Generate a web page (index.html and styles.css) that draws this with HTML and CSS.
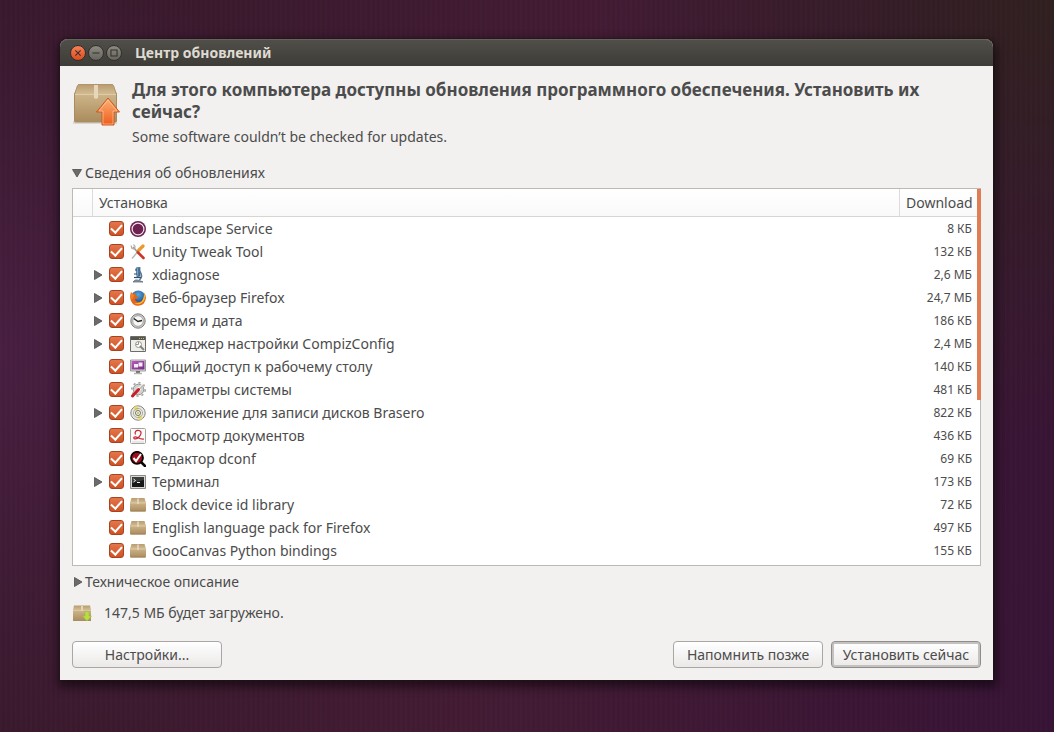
FILE: index.html
```html
<!DOCTYPE html>
<html lang="ru">
<head>
<meta charset="utf-8">
<meta name="viewport" content="width=device-width, initial-scale=1">
<title>Центр обновлений</title>
<link rel="stylesheet" href="styles.css">
</head>
<body>
<svg class="defs" aria-hidden="true">
  <defs>
    <linearGradient id="box" x1="0" y1="0" x2="0" y2="1"><stop offset="0" stop-color="#cfb68b"/><stop offset="1" stop-color="#a98c5d"/></linearGradient>
    <linearGradient id="lid" x1="0" y1="0" x2="0" y2="1"><stop offset="0" stop-color="#b99c70"/><stop offset="1" stop-color="#d3bc94"/></linearGradient>
    <linearGradient id="up" x1="0" y1="0" x2="0" y2="1"><stop offset="0" stop-color="#fbb276"/><stop offset="1" stop-color="#ee5c1c"/></linearGradient>
    <linearGradient id="purple" x1="0" y1="0" x2="1" y2="1"><stop offset="0" stop-color="#c05ac4"/><stop offset="1" stop-color="#6f2c7e"/></linearGradient>
    <radialGradient id="globe" cx=".5" cy=".3" r=".7"><stop offset="0" stop-color="#58a9e0"/><stop offset="1" stop-color="#143a7c"/></radialGradient>
    <symbol id="package" viewBox="0 0 16 16">
      <path d="M0 5h16v8.500q0 1-1 1H1q-1 0-1-1z" fill="url(#box)"/><path d="M1.500 1h13L16 6H0z" fill="url(#lid)"/>
      <path d="M0 6h16" stroke="#e2cfab" stroke-width=".8"/><path d="M.5 14h15" stroke="#9c8257" stroke-width=".8"/><path d="M7.300 1.500h1.400V7H7.300z" fill="#eadec6"/>
    </symbol>
  </defs>
</svg>
<main class="window">
  <header class="titlebar">
    <button class="dot dot-close" type="button" aria-label="Закрыть"><svg viewBox="0 0 16 16"><path d="M5 5l6 6M11 5l-6 6"/></svg></button>
    <button class="dot" type="button" aria-label="Свернуть"><svg viewBox="0 0 16 16"><path d="M4 8h8"/></svg></button>
    <button class="dot" type="button" aria-label="Развернуть"><svg viewBox="0 0 16 16"><path d="M4.500 4.500h7v7h-7z"/></svg></button>
    <span class="title">Центр обновлений</span>
  </header>
  <div class="content">
    <section class="intro">
      <svg class="intro-icon" viewBox="0 0 48 48" aria-hidden="true">
        <path d="M1 40h44v3H1z" fill="#000" opacity=".1"/>
        <path d="M2.500 12h42v28q0 1-1 1h-40q-1 0-1-1z" fill="url(#box)" stroke="#a88c5f"/>
        <path d="M7 3.500h33q1 0 1.500 1l3 9h-42l3-9q.5-1 1.500-1z" fill="url(#lid)" stroke="#b0946a"/>
        <path d="M3 13.500h41" stroke="#dfcba5"/><path d="M22 4h4v13q-2 1.500-4 0z" fill="#e6d7bb"/>
        <path d="M36 17L47.500 31H42v13H30V31h-5.500z" fill="url(#up)" stroke="#cf5421"/>
        <path d="M36 19l9 11h-4v13H31V30h-4z" fill="none" stroke="#ffd3a6" stroke-opacity=".6"/>
      </svg>
      <div>
        <h1>Для этого компьютера доступны обновления программного обеспечения. Установить их сейчас?</h1>
        <p>Some software couldn’t be checked for updates.</p>
      </div>
    </section>
    <button class="disclosure" type="button" aria-expanded="true"><svg class="arrow arrow-down" viewBox="0 0 10 10"><path d="M.5 1.500h9L5 9z"/></svg>Сведения об обновлениях</button>
    <div class="list">
      <table>
        <thead><tr><th class="gutter"></th><th class="name">Установка</th><th class="size">Download</th></tr></thead>
        <tbody>
          <tr><td></td><td><div class="item"><span class="expand"></span><input type="checkbox" id="u1" checked><label for="u1"><svg viewBox="0 0 16 16"><circle cx="8" cy="8" r="8" fill="#6d2250"/><circle cx="8" cy="8" r="5.900" fill="none" stroke="#f3e6ee" stroke-width="1.200"/></svg>Landscape Service</label></div></td><td class="size">8 КБ</td></tr>
          <tr><td></td><td><div class="item"><span class="expand"></span><input type="checkbox" id="u2" checked><label for="u2"><svg viewBox="0 0 16 16"><path d="M13 2L7.500 7.500" stroke="#eb9a2e" stroke-width="3.200" stroke-linecap="round"/><path d="M8 7.500L2 14.500" stroke="#b8b7af" stroke-width="1.400"/><path d="M3 3l5 5.500" stroke="#9a9a94" stroke-width="1.600"/><path d="M1 1.500l1 3L4.500 5 5 2.500 3.500.5" fill="none" stroke="#aaa9a2" stroke-width="1.200"/><path d="M8 8.500l5.500 5.500" stroke="#cb3427" stroke-width="2.600" stroke-linecap="round"/></svg>Unity Tweak Tool</label></div></td><td class="size">132 КБ</td></tr>
          <tr><td></td><td><div class="item"><button class="expand" type="button" aria-label="Показать"><svg class="arrow" viewBox="0 0 10 10"><path d="M1.500.5L9 5 1.500 9.500z"/></svg></button><input type="checkbox" id="u3" checked><label for="u3"><svg viewBox="0 0 16 16"><path d="M6 1l4-1v9l-3 1z" fill="#79a6cc" stroke="#385f83" stroke-width=".7"/><path d="M9 1v8M5 3h2M4 7h3" stroke="#264662"/><path d="M9.500 4q4 5 0 9" fill="none" stroke="#547795" stroke-width="1.600"/><path d="M4 10.500h7" stroke="#334f68" stroke-width="1.200"/><path d="M3 15q2-3 5-2l5 2z" fill="#8c9ba8" stroke="#53616e" stroke-width=".7"/></svg>xdiagnose</label></div></td><td class="size">2,6 МБ</td></tr>
          <tr><td></td><td><div class="item"><button class="expand" type="button" aria-label="Показать"><svg class="arrow" viewBox="0 0 10 10"><path d="M1.500.5L9 5 1.500 9.500z"/></svg></button><input type="checkbox" id="u4" checked><label for="u4"><svg viewBox="0 0 16 16"><circle cx="8.200" cy="7.500" r="7" fill="url(#globe)"/><path d="M1 2Q-.5 7 .8 10.500 3 16 8.500 15.700 15 15 15.800 8.500 16 5 14 2.500q.5 4-.5 6Q12 12 8.500 12 5 11.500 5 9l3-.7q1-1.500-1-1.800L5.500 5.800 6 3.500Q4 3 3 4z" fill="#e4661a"/><path d="M14 3q2.500 5-1 9-4 4-9 1 5 1 7.500-1.500Q14 9 14 3z" fill="#fbc02d"/><path d="M1 3q-1 4 .7 7L3.500 7l.7-2z" fill="#f58220"/></svg>Веб-браузер Firefox</label></div></td><td class="size">24,7 МБ</td></tr>
          <tr><td></td><td><div class="item"><button class="expand" type="button" aria-label="Показать"><svg class="arrow" viewBox="0 0 10 10"><path d="M1.500.5L9 5 1.500 9.500z"/></svg></button><input type="checkbox" id="u5" checked><label for="u5"><svg viewBox="0 0 16 16"><circle cx="8" cy="8" r="7.200" fill="#c9c9c7" stroke="#80807d"/><circle cx="8" cy="8" r="5.300" fill="#f7f7f6" stroke="#999" stroke-width=".8"/><path d="M3.800 5.500L8 8.500l4-1" fill="none" stroke="#222" stroke-width="1.500"/></svg>Время и дата</label></div></td><td class="size">186 КБ</td></tr>
          <tr><td></td><td><div class="item"><button class="expand" type="button" aria-label="Показать"><svg class="arrow" viewBox="0 0 10 10"><path d="M1.500.5L9 5 1.500 9.500z"/></svg></button><input type="checkbox" id="u6" checked><label for="u6"><svg viewBox="0 0 16 16"><path d="M.5.5h15v15H.5z" fill="#eeeeeb" stroke="#6e6e69"/><path d="M1 1h14v3H1z" fill="#565650"/><path d="M9 2.500h1M11 2.500h1M13 2.500h1" stroke="#e7ad4d"/><circle cx="8.500" cy="8.500" r="3" fill="#fff" stroke="#96968f"/><path d="M8.500 6v2.500H6" fill="none" stroke="#96968f"/><path d="M10 10l4 4" stroke="#85857f" stroke-width="2"/></svg>Менеджер настройки CompizConfig</label></div></td><td class="size">2,4 МБ</td></tr>
          <tr><td></td><td><div class="item"><span class="expand"></span><input type="checkbox" id="u7" checked><label for="u7"><svg viewBox="0 0 16 16"><path d="M.5 1h15v11H.5z" fill="#ddd" stroke="#858580" stroke-width=".8"/><path d="M1.500 2h13v8.500h-13z" fill="url(#purple)"/><path d="M4 5h4v3.500H4zM8.500 3.500h4v4h-4z" fill="#f8ebfa"/><path d="M6 12h4v2H6z" fill="#73736e"/><path d="M4 14.500h8" stroke="#b4b4af" stroke-width="1.500"/></svg>Общий доступ к рабочему столу</label></div></td><td class="size">140 КБ</td></tr>
          <tr><td></td><td><div class="item"><span class="expand"></span><input type="checkbox" id="u8" checked><label for="u8"><svg viewBox="0 0 16 16"><circle cx="8.500" cy="7.500" r="5.300" fill="#d2d2cf" stroke="#91918c"/><circle cx="8.500" cy="7.500" r="6.700" fill="none" stroke="#a1a19c" stroke-width="1.600" stroke-dasharray="2.200 3"/><circle cx="9" cy="7" r="2" fill="#f8f8f8"/><path d="M13.500 2L7 9" stroke="#eee" stroke-width="2.400"/><path d="M14 2.500L8 8.500" stroke="#8c8c89"/><path d="M8.500 7.500L2.500 14" stroke="#c91d2a" stroke-width="3" stroke-linecap="round"/></svg>Параметры системы</label></div></td><td class="size">481 КБ</td></tr>
          <tr><td></td><td><div class="item"><button class="expand" type="button" aria-label="Показать"><svg class="arrow" viewBox="0 0 10 10"><path d="M1.500.5L9 5 1.500 9.500z"/></svg></button><input type="checkbox" id="u9" checked><label for="u9"><svg viewBox="0 0 16 16"><circle cx="8" cy="8" r="7.200" fill="#e9e9e4" stroke="#84847f"/><path d="M8 8L3 3q2-2 5-2zM8 8l5 5q-2 2-5 2z" fill="#e9dd6f"/><circle cx="8" cy="8" r="4.600" fill="none" stroke="#a2a28f" stroke-width=".8"/><circle cx="8" cy="8" r="2.500" fill="#f8f8f2" stroke="#75756b"/><circle cx="8" cy="8" r="1" fill="#c0b846"/></svg>Приложение для записи дисков Brasero</label></div></td><td class="size">822 КБ</td></tr>
          <tr><td></td><td><div class="item"><span class="expand"></span><input type="checkbox" id="u10" checked><label for="u10"><svg viewBox="0 0 16 16"><rect x=".5" y=".5" width="15" height="15" rx="1" fill="#fafafa" stroke="#a2a29e"/><path d="M5.500 6.500C4 3.500 6.500 2 9 2.500c3 .7 2.500 4 0 6.500-1.500 1.500-3.500 2.500-5 1.500-1-1.500 1.500-2 3.500-1s4 2 6.500 1.500" fill="none" stroke="#cc2330" stroke-width="1.200"/><path d="M2 14h12" stroke="#d5d5d2"/></svg>Просмотр документов</label></div></td><td class="size">436 КБ</td></tr>
          <tr><td></td><td><div class="item"><span class="expand"></span><input type="checkbox" id="u11" checked><label for="u11"><svg viewBox="0 0 16 16"><path d="M11 11l4 4" stroke="#080808" stroke-width="2.500" stroke-linecap="round"/><circle cx="7" cy="6.800" r="6" fill="#9e1019" stroke="#0b0505" stroke-width="1.800"/><path d="M3.500 7L6 10 11 3" fill="none" stroke="#fff" stroke-width="2"/></svg>Редактор dconf</label></div></td><td class="size">69 КБ</td></tr>
          <tr><td></td><td><div class="item"><button class="expand" type="button" aria-label="Показать"><svg class="arrow" viewBox="0 0 10 10"><path d="M1.500.5L9 5 1.500 9.500z"/></svg></button><input type="checkbox" id="u12" checked><label for="u12"><svg viewBox="0 0 16 16"><path d="M.5 1.500h15v13H.5z" fill="#d8d8d5" stroke="#8a8a86"/><path d="M2 3h12v10H2z" fill="#171918"/><path d="M2 3h12v3L2 9z" fill="#fff" opacity=".16"/><path d="M3.500 5l2 1.500-2 1.500M7 8.500h3" fill="none" stroke="#eee"/></svg>Терминал</label></div></td><td class="size">173 КБ</td></tr>
          <tr><td></td><td><div class="item"><span class="expand"></span><input type="checkbox" id="u13" checked><label for="u13"><svg><use href="#package"/></svg>Block device id library</label></div></td><td class="size">72 КБ</td></tr>
          <tr><td></td><td><div class="item"><span class="expand"></span><input type="checkbox" id="u14" checked><label for="u14"><svg><use href="#package"/></svg>English language pack for Firefox</label></div></td><td class="size">497 КБ</td></tr>
          <tr><td></td><td><div class="item"><span class="expand"></span><input type="checkbox" id="u15" checked><label for="u15"><svg><use href="#package"/></svg>GooCanvas Python bindings</label></div></td><td class="size">155 КБ</td></tr>
        </tbody>
      </table>
      <div class="scroll-thumb"></div>
    </div>
    <button class="disclosure" type="button" aria-expanded="false"><svg class="arrow" viewBox="0 0 10 10"><path d="M2.500.5L10 5 2.500 9.500z"/></svg>Техническое описание</button>
    <div class="status">
      <svg viewBox="0 0 20 20" aria-hidden="true"><path d="M1 7h18v11H1z" fill="url(#box)"/><path d="M2 2.500h16l1 4.500H1z" fill="url(#lid)"/><path d="M1 7.500h18" stroke="#dcc9a4" stroke-width=".8"/><path d="M9 3h2v5H9z" fill="#e4d4b5"/><path d="M13 8.500h4V13h2.500L15 18l-4.500-5H13z" fill="#b9df3c" stroke="#9aba4a" stroke-width=".6"/></svg>
      <span>147,5 МБ будет загружено.</span>
    </div>
    <footer class="actions">
      <button class="btn" type="button">Настройки...</button>
      <span class="spacer"></span>
      <button class="btn" type="button">Напомнить позже</button>
      <button class="btn btn-default" type="button">Установить сейчас</button>
    </footer>
  </div>
</main>
</body>
</html>
```

FILE: styles.css
```css
* { box-sizing: border-box; }
body {
  margin: 0;
  min-height: 100vh;
  padding: 39px 61px 51px 60px;
  font: 14px/22px "Noto Sans", "Open Sans", sans-serif;
  color: #4c4c4c;
  background:
    repeating-linear-gradient(90deg, rgba(255, 255, 255, .01) 0 2px, transparent 2px 5px),
    radial-gradient(circle at 100% 0, #30201f 0, rgba(48, 32, 31, 0) 35%),
    radial-gradient(circle at 0 48%, #471e40 0, rgba(71, 30, 64, 0) 35%),
    linear-gradient(100deg, #36182a, #421b33 50%, #371335);
}
button { font: inherit; color: inherit; }
.defs { position: absolute; width: 0; height: 0; }
.window {
  border-radius: 8px 8px 0 0;
  background: #f2f1f0;
  box-shadow: 0 0 0 1px rgba(30, 20, 25, .4), 1px 4px 10px 3px rgba(0, 0, 0, .5);
}
.titlebar {
  display: flex;
  align-items: center;
  gap: 2px;
  height: 27px;
  padding: 0 10px;
  border-radius: 8px 8px 0 0;
  background: linear-gradient(#504f49, #3d3c37);
  box-shadow: inset 0 1px #656459;
}
.title { padding-left: 11px; font-size: 14px; font-weight: 700; color: #dfdbd2; }
.dot {
  width: 16px;
  height: 16px;
  padding: 0;
  border: 1px solid #32312d;
  border-radius: 50%;
  background: linear-gradient(#8b8980, #66645d);
}
.dot-close { background: linear-gradient(#f58057, #df4a1c); }
.dot svg { display: block; width: 14px; height: 14px; fill: none; stroke: #32312d; stroke-width: 1.2; }
.content { display: flex; flex-direction: column; padding: 13px 12px 12px; }
.intro { display: flex; gap: 12px; }
.intro-icon { flex: none; width: 48px; height: 48px; margin-top: 2px; }
h1 { margin: 0; font-size: 17px; line-height: 22px; font-weight: 700; }
p { margin: 3px 0 0; }
.disclosure {
  display: flex;
  align-items: center;
  gap: 3px;
  align-self: flex-start;
  padding: 0;
  border: 0;
  background: none;
}
.intro + .disclosure { margin: 14px 0 4px; }
.arrow { display: block; width: 10px; height: 10px; fill: #6b6b6b; stroke: #4c4c4c; stroke-width: .8; }
.list { position: relative; padding-bottom: 3px; border: 1px solid #bdb9b5; background: #fff; }
table { width: 100%; border-collapse: separate; border-spacing: 0; table-layout: fixed; }
th {
  height: 28px;
  padding: 0 6px;
  border-bottom: 1px solid #d7d5d3;
  border-right: 1px solid #dedcda;
  background: linear-gradient(#fff, #f9f9f9);
  font-weight: 400;
  text-align: left;
}
th:last-child { border-right: 0; }
td { height: 23px; padding: 0; }
.gutter { width: 20px; }
th.size { width: 80px; }
td.size { padding-right: 8px; font-size: 12px; text-align: right; }
.item { display: flex; align-items: center; gap: 6px; height: 23px; }
.expand { flex: none; width: 10px; padding: 0; border: 0; background: none; }
input {
  appearance: none;
  flex: none;
  width: 15px;
  height: 15px;
  margin: 0;
  border: 1px solid #a9431f;
  border-radius: 3px;
  background: linear-gradient(#e4764c, #cf5223);
}
input:checked::before {
  content: "";
  display: block;
  width: 5px;
  height: 9px;
  margin: 0 auto;
  border: solid #fff;
  border-width: 0 2px 2px 0;
  transform: rotate(42deg);
}
label { display: flex; align-items: center; gap: 6px; white-space: nowrap; }
label svg { flex: none; width: 16px; height: 16px; }
.scroll-thumb { position: absolute; top: 0; right: -1px; width: 4px; height: 56%; background: #e07d55; }
.list + .disclosure { margin-top: 5px; }
.status { display: flex; align-items: center; gap: 12px; margin-top: 9px; }
.status svg { width: 20px; height: 20px; }
.actions { display: flex; gap: 8px; margin-top: 17px; }
.spacer { flex: 1; }
.btn {
  min-width: 150px;
  height: 27px;
  padding: 0 8px;
  border: 1px solid #a9a6a3;
  border-radius: 4px;
  background: linear-gradient(#fff, #ebe9e8);
  line-height: 24px;
}
.btn-default { border-color: #8f8c89; box-shadow: inset 0 0 0 2px #c4c2c0; }
```
